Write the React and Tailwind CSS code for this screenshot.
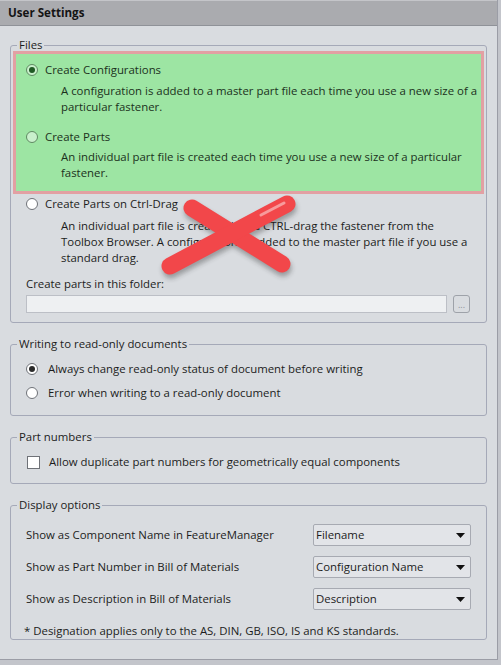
import React from "react";

const font = { fontFamily: '"Open Sans", "Noto Sans", sans-serif' };

const Radio = ({ checked, green }) => (
  <span
    className={`flex h-[12px] w-[12px] shrink-0 items-center justify-center rounded-full border ${
      green ? "border-[#5f8a62] bg-[#c9f0cc]" : "border-[#6f7278] bg-white"
    }`}
  >
    {checked && (
      <span
        className={`h-[6px] w-[6px] rounded-full ${
          green ? "bg-[#1f5a24]" : "bg-[#2a2a2a]"
        }`}
      />
    )}
  </span>
);

const Group = ({ title, className, children }) => (
  <fieldset
    className={`rounded-[3px] border border-[#a5a9b8] ${className || ""}`}
  >
    <legend className="ml-[6px] px-[2px] text-[11.4px] leading-[16px]">
      {title}
    </legend>
    {children}
  </fieldset>
);

const Select = ({ value }) => (
  <div className="flex h-[22px] w-[158px] items-center justify-between rounded-[2px] border border-[#a7aab2] bg-[#e2e4e8] pl-[2px] pr-[5px]">
    <span className="text-[11.4px] leading-[16px]">{value}</span>
    <svg width="9" height="5" viewBox="0 0 9 5">
      <path d="M0 0 L9 0 L4.5 5 Z" fill="#111" />
    </svg>
  </div>
);

const App = () => {
  return (
    <div
      className="relative h-[665px] w-[501px] bg-[#c3c5cb] text-[11.4px] leading-[16px] text-[#1c1c1c]"
      style={font}
    >
      <div className="h-[660px] w-[498px] border-r border-b border-[#9b9da6] bg-[#d9dce0]">
        <div className="flex h-[26px] items-center border-t border-b border-t-[#c4c5c9] border-b-[#8f9298] bg-[#aaabaf] pl-[8px]">
          <span className="text-[11.6px] font-bold leading-[16px] text-[#141414]">
            User Settings
          </span>
        </div>

        <div className="flex flex-col gap-[13px] px-[10px] pt-[11px]">
          <Group title="Files" className="pb-[9px]">
            <div className="mx-[2px] -mt-[2px] border-[3px] border-[#e2a0a3] bg-[#9de5a3] pb-[10px] pl-[10px] pt-[8px] text-[#1b311c]">
              <div className="flex h-[16px] items-center gap-[7px]">
                <Radio checked green />
                <span>Create Configurations</span>
              </div>
              <p className="mt-[5px] pl-[35px]">
                A configuration is added to a master part file each time you use
                a new size of a particular fastener.
              </p>
              <div className="mt-[14px] flex h-[16px] items-center gap-[7px]">
                <Radio green />
                <span>Create Parts</span>
              </div>
              <p className="mt-[4px] pl-[35px] pr-[4px]">
                An individual part file is created each time you use a new size
                of a particular fastener.
              </p>
            </div>

            <div className="mt-[2px] pl-[15px] pr-[8px]">
              <div className="flex h-[16px] items-center gap-[7px]">
                <Radio />
                <span>Create Parts on Ctrl-Drag</span>
              </div>
              <p className="mt-[6px] pl-[35px]">
                An individual part file is created if you CTRL-drag the fastener
                from the Toolbox Browser. A configuration is added to the master
                part file if you use a standard drag.
              </p>
              <p className="mt-[10px]">Create parts in this folder:</p>
              <div className="mt-[3px] flex items-center gap-[6px]">
                <div className="h-[18px] w-[421px] border border-[#bcbfc6] bg-[#eef0f2]" />
                <div className="flex h-[18px] w-[17px] items-end justify-center rounded-[3px] border border-[#9ea2a9] bg-[#d9dce0] pb-[4px]">
                  <span className="text-[9px] leading-[6px] text-[#8d9097]">
                    ...
                  </span>
                </div>
              </div>
            </div>
          </Group>

          <Group title="Writing to read-only documents" className="pb-[14px]">
            <div className="mt-[9px] flex flex-col gap-[8px] pl-[15px]">
              <div className="flex h-[16px] items-center gap-[10px]">
                <Radio checked />
                <span>
                  Always change read-only status of document before writing
                </span>
              </div>
              <div className="flex h-[16px] items-center gap-[10px]">
                <Radio />
                <span>Error when writing to a read-only document</span>
              </div>
            </div>
          </Group>

          <Group title="Part numbers" className="pb-[13px]">
            <div className="mt-[9px] flex h-[16px] items-center gap-[9px] pl-[16px]">
              <span className="h-[13px] w-[13px] shrink-0 border border-[#6f7278] bg-white" />
              <span>
                Allow duplicate part numbers for geometrically equal components
              </span>
            </div>
          </Group>

          <Group title="Display options" className="pb-0">
            <div className="mt-[11px] flex flex-col gap-[10px] pl-[15px] pr-[15px]">
              {[
                ["Show as Component Name in FeatureManager", "Filename"],
                ["Show as Part Number in Bill of Materials", "Configuration Name"],
                ["Show as Description in Bill of Materials", "Description"],
              ].map(([label, value]) => (
                <div key={label} className="flex items-center justify-between">
                  <span>{label}</span>
                  <Select value={value} />
                </div>
              ))}
            </div>
            <p className="mt-[13px] pl-[13px]">
              * Designation applies only to the AS, DIN, GB, ISO, IS and KS
              standards.
            </p>
          </Group>
        </div>
      </div>

      <svg
        className="pointer-events-none absolute left-0 top-0"
        width="501"
        height="665"
        viewBox="0 0 501 665"
      >
        <defs>
          <filter id="sh" x="-20%" y="-20%" width="140%" height="140%">
            <feGaussianBlur stdDeviation="2.5" />
          </filter>
        </defs>
        <g opacity="0.35" filter="url(#sh)" transform="translate(1 4)">
          <line x1="192" y1="208" x2="282" y2="264" stroke="#222" strokeWidth="17" strokeLinecap="round" />
          <line x1="287" y1="204" x2="170" y2="266" stroke="#222" strokeWidth="17" strokeLinecap="round" />
        </g>
        <line x1="192" y1="208" x2="282" y2="264" stroke="#f2474a" strokeWidth="17" strokeLinecap="round" />
        <line x1="287" y1="204" x2="170" y2="266" stroke="#f2474a" strokeWidth="17" strokeLinecap="round" />
        <line x1="284" y1="203" x2="261" y2="215" stroke="#f79a9b" strokeWidth="3" strokeLinecap="round" />
      </svg>
    </div>
  );
};

export default App;
